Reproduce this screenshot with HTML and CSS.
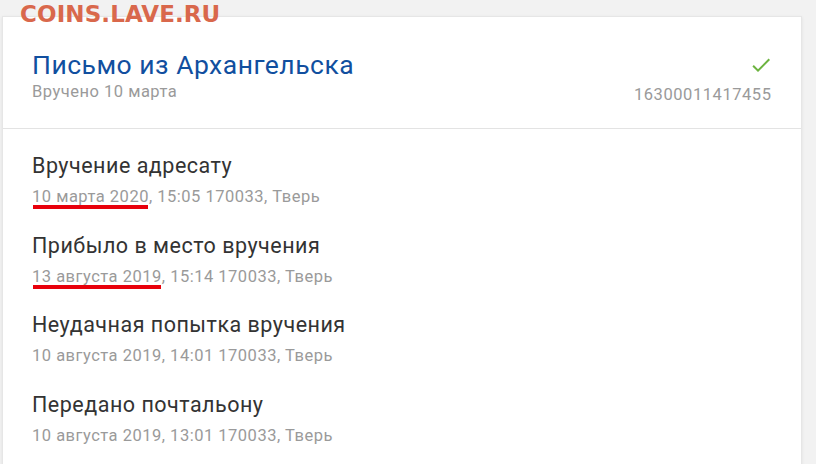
FILE: index.html
```html
<!DOCTYPE html>
<html lang="ru">
<head>
<meta charset="utf-8">
<link rel="stylesheet" href="styles.css">
</head>
<body>
<div class="watermark">COINS.LAVE.RU</div>
<div class="card">
  <div class="header">
    <div class="header-left">
      <div class="title">Письмо из Архангельска</div>
      <div class="subtitle">Вручено 10 марта</div>
    </div>
    <div class="header-right">
      <svg class="check" width="24" height="24" viewBox="0 0 24 24"><path d="M9 16.17L4.83 12l-1.42 1.41L9 19 21 7l-1.41-1.41z" fill="#6cb33f"/></svg>
      <div class="track">16300011417455</div>
    </div>
  </div>
  <div class="events">
    <div class="event">
      <div class="event-title">Вручение адресату</div>
      <div class="event-meta"><span class="mark">10 марта 2020</span>, 15:05 170033, Тверь</div>
    </div>
    <div class="event">
      <div class="event-title">Прибыло в место вручения</div>
      <div class="event-meta"><span class="mark">13 августа 2019</span>, 15:14 170033, Тверь</div>
    </div>
    <div class="event">
      <div class="event-title">Неудачная попытка вручения</div>
      <div class="event-meta">10 августа 2019, 14:01 170033, Тверь</div>
    </div>
    <div class="event">
      <div class="event-title">Передано почтальону</div>
      <div class="event-meta">10 августа 2019, 13:01 170033, Тверь</div>
    </div>
  </div>
</div>
</body>
</html>
```
FILE: styles.css
```css
html, body {
  margin: 0;
  padding: 0;
}
body {
  background: #f2f2f2;
  font-family: Roboto, "Noto Sans", sans-serif;
  height: 464px;
  overflow: hidden;
  position: relative;
}
.watermark {
  position: absolute;
  left: 20px;
  top: 0;
  font-family: "DejaVu Sans", Verdana, sans-serif;
  font-weight: bold;
  font-size: 23px;
  line-height: 28px;
  letter-spacing: 0.1px;
  color: #d9684c;
  z-index: 2;
}
.card {
  margin: 16px 0 0 2px;
  width: 800px;
  height: 470px;
  box-sizing: border-box;
  background: #fff;
  border: 1px solid #e6e6e6;
  box-shadow: 0 1px 3px rgba(0, 0, 0, 0.08);
}
.header {
  display: flex;
  justify-content: space-between;
  align-items: flex-start;
  padding: 33px 30px 23px 29px;
  border-bottom: 1px solid #e3e3e3;
}
.title {
  font-size: 26.5px;
  line-height: 30px;
  letter-spacing: 0.5px;
  color: #114f9f;
}
.subtitle {
  margin-top: 2px;
  font-size: 16.5px;
  line-height: 20px;
  letter-spacing: 0.5px;
  color: #9a9a9a;
}
.header-right {
  display: flex;
  flex-direction: column;
  align-items: flex-end;
  margin-top: 3px;
}
.check {
  display: block;
  margin-right: -2px;
}
.track {
  margin-top: 8px;
  margin-right: -0.5px;
  font-size: 16.5px;
  line-height: 20px;
  letter-spacing: 0.55px;
  color: #9a9a9a;
}
.events {
  display: flex;
  flex-direction: column;
  gap: 25.5px;
  padding: 24px 29px;
}
.event-title {
  font-size: 21.5px;
  line-height: 26px;
  letter-spacing: 0.5px;
  color: #333;
}
.event-meta {
  margin-top: 8px;
  font-size: 16.5px;
  line-height: 20px;
  letter-spacing: 0.5px;
  color: #9a9a9a;
}
.mark {
  position: relative;
}
.mark::after {
  content: "";
  position: absolute;
  left: 1px;
  right: 1px;
  bottom: -3px;
  height: 4px;
  background: #e8000b;
}
```
